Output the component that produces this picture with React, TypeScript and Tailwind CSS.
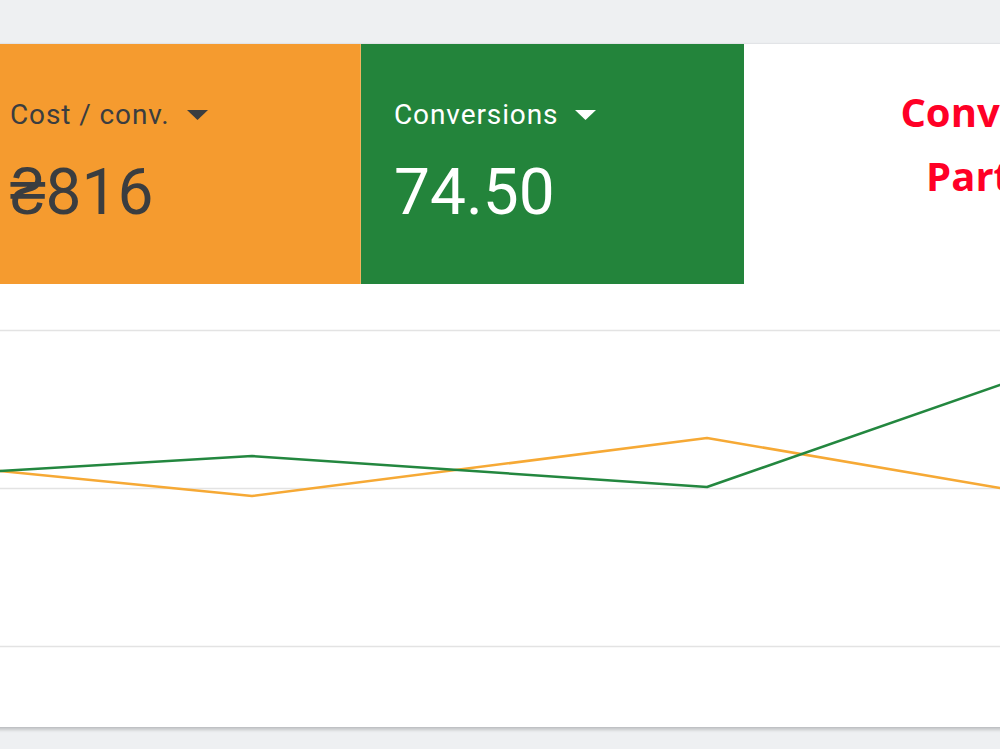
const orange = [
  [0, 185],
  [23, 187],
  [275, 212],
  [730, 154],
  [1023, 204],
  [1200, 234],
];
const green = [
  [0, 188],
  [23, 187],
  [275, 172],
  [730, 203],
  [1023, 101],
  [1200, 40],
];

const pts = (list: number[][]) => list.map(([x, y]) => `${x},${y}`).join(" ");

function Caret({ color }: { color: string }) {
  return (
    <svg width="21" height="10" viewBox="0 0 21 10" className="shrink-0">
      <polygon points="0,0 21,0 10.5,10" fill={color} />
    </svg>
  );
}

function Tile({
  label, value, bg, text, caret,
}: {
  label: string; value: string; bg: string; text: string; caret: string;
}) {
  return (
    <div className={`shrink-0 w-[383px] h-[240px] pl-[33px] pt-[53px] ${bg} ${text}`}>
      <div className="flex items-center gap-[17px] h-[36px]">
        <span className="text-[28px] leading-[36px] tracking-[0.9px] font-['Roboto',sans-serif]">{label}</span>
        <Caret color={caret} />
      </div>
      <div className="mt-[24px] text-[64px] leading-[72px] font-['Roboto',sans-serif]">{value}</div>
    </div>
  );
}

export default function App() {
  return (
    <div className="w-[1000px] h-[749px] overflow-hidden bg-[#eef0f2] pt-[43px]">
      <div className="-ml-[23px] w-[1200px] bg-white border-t border-[#e2e4e7] border-b border-b-[#bfc1c4] shadow-[0_2px_3px_rgba(0,0,0,0.18)]">
        <div className="flex">
          <Tile label="Cost / conv." value="₴816" bg="bg-[#f59b2f]" text="text-[#3a3d40]" caret="#3a3d40" />
          <div className="shrink-0 w-[1px] bg-[#f2b25f]" />
          <Tile label="Conversions" value="74.50" bg="bg-[#23843b]" text="text-white" caret="#ffffff" />
          <div className="flex-1 flex flex-col items-center pt-[36px] pl-[104px] text-[40px] leading-[64px] font-bold text-[#ff0026] font-['Open_Sans',sans-serif]">
            <span>Conversion</span>
            <span>Partners</span>
          </div>
        </div>
        <svg width="1200" height="443" viewBox="0 0 1200 443" className="block">
          <line x1="0" y1="46.5" x2="1200" y2="46.5" stroke="#e3e3e3" strokeWidth="1.5" />
          <line x1="0" y1="204.5" x2="1200" y2="204.5" stroke="#e3e3e3" strokeWidth="1.5" />
          <line x1="0" y1="362.5" x2="1200" y2="362.5" stroke="#e3e3e3" strokeWidth="1.5" />
          <polyline points={pts(orange)} fill="none" stroke="#f6a935" strokeWidth="2.5" strokeLinejoin="round" />
          <polyline points={pts(green)} fill="none" stroke="#23873f" strokeWidth="2.5" strokeLinejoin="round" />
        </svg>
      </div>
    </div>
  );
}
